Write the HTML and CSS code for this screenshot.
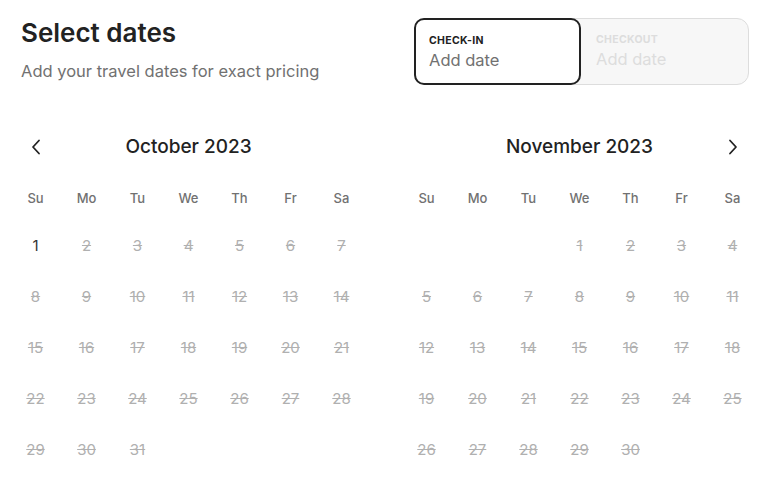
FILE: index.html
```html
<!DOCTYPE html>
<html lang="en">
<head>
<meta charset="utf-8">
<title>Select dates</title>
<link rel="stylesheet" href="styles.css">
</head>
<body>
<div class="page">
  <header class="top">
    <div class="titles">
      <h1 class="title">Select dates</h1>
      <p class="subtitle">Add your travel dates for exact pricing</p>
    </div>
    <div class="dates">
      <div class="field active">
        <span class="lbl">Check-in</span>
        <span class="val">Add date</span>
      </div>
      <div class="field off">
        <span class="lbl">Checkout</span>
        <span class="val">Add date</span>
      </div>
    </div>
  </header>

  <section class="cal">
    <div class="month">
      <div class="mhead">
        <span class="nav"><svg width="10" height="16" viewBox="0 0 10 16"><polyline points="8,1.5 2,8 8,14.5" fill="none" stroke="#222" stroke-width="1.8" stroke-linecap="round" stroke-linejoin="round"/></svg></span>
        <h2 class="mtitle">October 2023</h2>
        <span class="nav"></span>
      </div>
      <div class="grid wd">
        <span>Su</span><span>Mo</span><span>Tu</span><span>We</span><span>Th</span><span>Fr</span><span>Sa</span>
      </div>
      <div class="grid days">
        <span class="d">1</span><span class="d x">2</span><span class="d x">3</span><span class="d x">4</span><span class="d x">5</span><span class="d x">6</span><span class="d x">7</span>
        <span class="d x">8</span><span class="d x">9</span><span class="d x">10</span><span class="d x">11</span><span class="d x">12</span><span class="d x">13</span><span class="d x">14</span>
        <span class="d x">15</span><span class="d x">16</span><span class="d x">17</span><span class="d x">18</span><span class="d x">19</span><span class="d x">20</span><span class="d x">21</span>
        <span class="d x">22</span><span class="d x">23</span><span class="d x">24</span><span class="d x">25</span><span class="d x">26</span><span class="d x">27</span><span class="d x">28</span>
        <span class="d x">29</span><span class="d x">30</span><span class="d x">31</span>
      </div>
    </div>

    <div class="month">
      <div class="mhead">
        <span class="nav"></span>
        <h2 class="mtitle">November 2023</h2>
        <span class="nav"><svg width="10" height="16" viewBox="0 0 10 16"><polyline points="2,1.5 8,8 2,14.5" fill="none" stroke="#222" stroke-width="1.8" stroke-linecap="round" stroke-linejoin="round"/></svg></span>
      </div>
      <div class="grid wd">
        <span>Su</span><span>Mo</span><span>Tu</span><span>We</span><span>Th</span><span>Fr</span><span>Sa</span>
      </div>
      <div class="grid days">
        <span class="d"></span><span class="d"></span><span class="d"></span><span class="d x">1</span><span class="d x">2</span><span class="d x">3</span><span class="d x">4</span>
        <span class="d x">5</span><span class="d x">6</span><span class="d x">7</span><span class="d x">8</span><span class="d x">9</span><span class="d x">10</span><span class="d x">11</span>
        <span class="d x">12</span><span class="d x">13</span><span class="d x">14</span><span class="d x">15</span><span class="d x">16</span><span class="d x">17</span><span class="d x">18</span>
        <span class="d x">19</span><span class="d x">20</span><span class="d x">21</span><span class="d x">22</span><span class="d x">23</span><span class="d x">24</span><span class="d x">25</span>
        <span class="d x">26</span><span class="d x">27</span><span class="d x">28</span><span class="d x">29</span><span class="d x">30</span>
      </div>
    </div>
  </section>
</div>
</body>
</html>
```

FILE: styles.css
```css
* { box-sizing: border-box; }

html, body {
  margin: 0;
  padding: 0;
  background: #ffffff;
}

body {
  font-family: Inter, "Noto Sans", "Liberation Sans", sans-serif;
  color: #222222;
  width: 768px;
  height: 481px;
  overflow: hidden;
}

.top {
  display: flex;
  justify-content: space-between;
  align-items: flex-start;
  padding: 18px 19px 0 21px;
}

.title {
  margin: -1px 0 0 0;
  font-size: 26px;
  line-height: 32px;
  font-weight: 600;
  color: #222222;
}

.subtitle {
  margin: 12px 0 0 0;
  font-size: 16.5px;
  line-height: 20px;
  font-weight: 400;
  color: #717171;
}

.dates {
  display: flex;
  width: 335px;
  height: 67px;
  border: 1px solid #dddddd;
  border-radius: 12px;
  background: #f7f7f7;
}

.field {
  display: flex;
  flex-direction: column;
  width: 167px;
}

.field.active {
  margin: -1px 0 -1px -1px;
  height: 67px;
  border: 2px solid #222222;
  border-radius: 10px;
  background: #ffffff;
  padding: 15px 12px 0 13px;
}

.field.off {
  padding: 15px 12px 0 15px;
  color: #dddddd;
}

.lbl {
  font-size: 10.5px;
  line-height: 12px;
  font-weight: 700;
  letter-spacing: 0.3px;
  text-transform: uppercase;
}

.active .lbl { color: #222222; }

.val {
  margin-top: 3px;
  font-size: 16.5px;
  line-height: 20px;
  font-weight: 400;
}

.active .val { color: #717171; }

.cal {
  display: flex;
  gap: 34px;
  margin-top: 37px;
  padding-left: 10px;
}

.month {
  width: 357px;
}

.mhead {
  display: grid;
  grid-template-columns: 51px 1fr 51px;
  align-items: center;
  height: 50px;
}

.nav {
  display: flex;
  justify-content: center;
  align-items: center;
  height: 50px;
}

.mtitle {
  margin: 0;
  text-align: center;
  font-size: 19px;
  line-height: 24px;
  font-weight: 500;
  color: #222222;
}

.grid {
  display: grid;
  grid-template-columns: repeat(7, 51px);
}

.wd {
  height: 48px;
  padding-top: 3px;
  align-items: center;
}

.wd span {
  text-align: center;
  font-size: 13px;
  line-height: 16px;
  font-weight: 500;
  color: #717171;
}

.days {
  grid-auto-rows: 51px;
}

.d {
  display: flex;
  justify-content: center;
  align-items: center;
  font-size: 15px;
  font-weight: 400;
  color: #333333;
}

.d.x {
  color: #b0b0b0;
  text-decoration: line-through;
}
```
